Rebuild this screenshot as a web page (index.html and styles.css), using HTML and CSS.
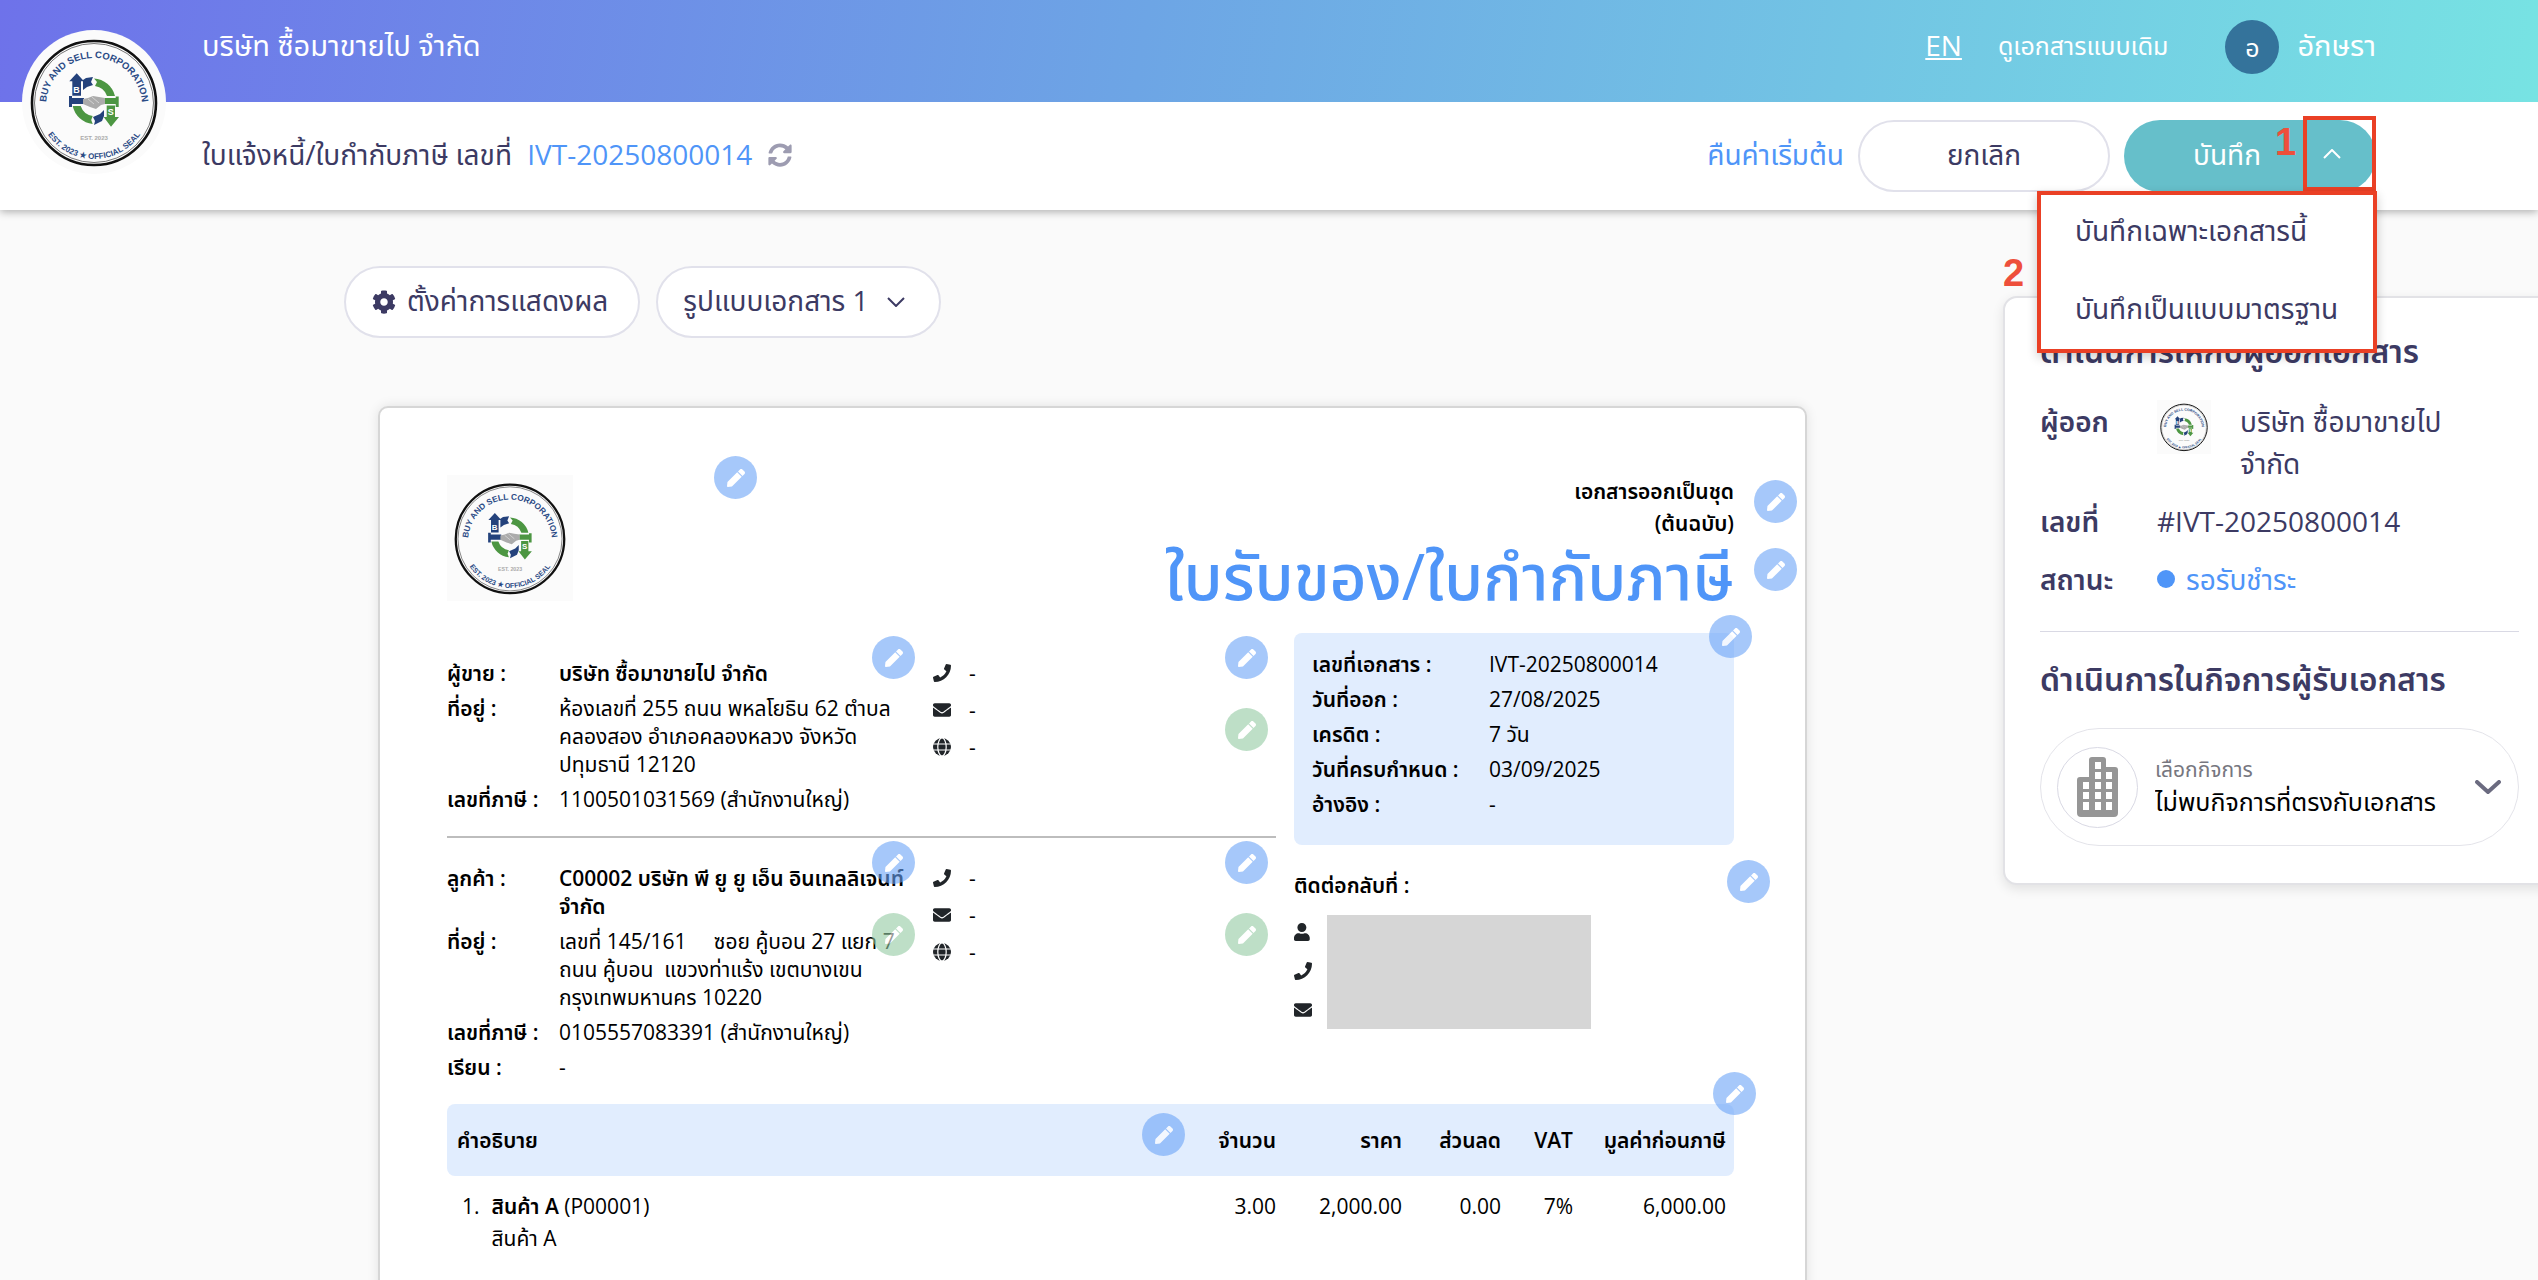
FILE: index.html
```html
<!DOCTYPE html>
<html lang="th">
<head>
  <meta charset="UTF-8" />
  <meta name="viewport" content="width=device-width, initial-scale=1.0"/>
  <title>ใบแจ้งหนี้/ใบกำกับภาษี IVT-20250800014</title>
  <link rel="stylesheet" href="styles.css">
</head>
<body>

  <!-- ICONS -->
  <svg class="sprite" aria-hidden="true">
    <symbol id="pen" viewBox="0 0 512 512"><path d="M290.74 93.24l128.02 128.02-277.99 277.99-114.14 12.6C11.35 513.54-1.56 500.62.14 485.34l12.7-114.22 277.9-277.88zm207.2-19.06l-60.11-60.11c-18.75-18.75-49.16-18.75-67.91 0l-56.55 56.55 128.02 128.02 56.55-56.55c18.75-18.76 18.75-49.16 0-67.91z"/></symbol>
    <symbol id="phone" viewBox="0 0 512 512"><path d="M493.4 24.6l-104-24c-11.3-2.6-22.9 3.3-27.5 13.9l-48 112c-4.2 9.8-1.4 21.3 6.9 28l60.6 49.6c-36 76.7-98.9 140.5-177.2 177.2l-49.6-60.6c-6.8-8.3-18.2-11.1-28-6.9l-112 48C3.9 366.5-2 378.1.6 389.4l24 104C27.1 504.2 36.7 512 48 512c256.1 0 464-207.5 464-464 0-11.2-7.7-20.9-18.6-23.4z"/></symbol>
    <symbol id="mail" viewBox="0 0 512 512"><path d="M502.3 190.8c3.9-3.1 9.7-.2 9.7 4.7V400c0 26.5-21.5 48-48 48H48c-26.5 0-48-21.5-48-48V195.6c0-5 5.7-7.8 9.7-4.7 22.4 17.4 52.1 39.5 154.1 113.6 21.1 15.4 56.7 47.8 92.2 47.6 35.7.3 72-32.8 92.3-47.6 102-74.1 131.6-96.3 154-113.7zM256 320c23.2.4 56.6-29.2 73.4-41.4 132.7-96.3 142.8-104.7 173.4-128.7 5.8-4.5 9.2-11.5 9.2-18.9v-19c0-26.5-21.5-48-48-48H48c-26.5 0-48 21.5-48 48v19c0 7.4 3.4 14.3 9.2 18.9 30.6 23.9 40.7 32.4 173.4 128.7 16.8 12.2 50.2 41.8 73.4 41.4z"/></symbol>
    <symbol id="user" viewBox="0 0 512 512"><path d="M224 256c70.7 0 128-57.3 128-128S294.7 0 224 0 96 57.3 96 128s57.3 128 128 128zm89.6 32h-16.7c-22.2 10.2-46.9 16-72.9 16s-50.6-5.8-72.9-16h-16.7C60.2 288 0 348.2 0 422.4V464c0 26.5 21.5 48 48 48h352c26.5 0 48-21.5 48-48v-41.6c0-74.2-60.2-134.4-134.4-134.4z"/></symbol>
    <symbol id="globe" viewBox="0 0 18 18"><circle cx="9" cy="9" r="9"/><g fill="none" stroke="#fff" stroke-width="1.2"><ellipse cx="9" cy="9" rx="4.2" ry="9"/><path d="M0 6h18M0 12h18"/></g></symbol>
    <symbol id="cog" viewBox="0 0 512 512"><path d="M487.4 315.7l-42.6-24.6c4.3-23.2 4.3-47 0-70.2l42.6-24.6c4.9-2.8 7.1-8.6 5.5-14-11.1-35.6-30-67.8-54.7-94.6-3.8-4.1-10-5.1-14.8-2.3L380.8 110c-17.9-15.4-38.5-27.3-60.8-35.1V25.8c0-5.6-3.9-10.5-9.4-11.7-36.7-8.2-74.3-7.8-109.2 0-5.5 1.2-9.4 6.1-9.4 11.7V75c-22.2 7.9-42.8 19.8-60.8 35.1L88.7 85.5c-4.9-2.8-11-1.9-14.8 2.3-24.7 26.7-43.6 58.9-54.7 94.6-1.7 5.4.6 11.2 5.5 14L67.3 221c-4.3 23.2-4.3 47 0 70.2l-42.6 24.6c-4.9 2.8-7.1 8.6-5.5 14 11.1 35.6 30 67.8 54.7 94.6 3.8 4.1 10 5.1 14.8 2.3l42.6-24.6c17.9 15.4 38.5 27.3 60.8 35.1v49.2c0 5.6 3.9 10.5 9.4 11.7 36.7 8.2 74.3 7.8 109.2 0 5.5-1.2 9.4-6.1 9.4-11.7v-49.2c22.2-7.9 42.8-19.8 60.8-35.1l42.6 24.6c4.9 2.8 11 1.9 14.8-2.3 24.7-26.7 43.6-58.9 54.7-94.6 1.5-5.5-.7-11.3-5.6-14.1zM256 336c-44.1 0-80-35.9-80-80s35.9-80 80-80 80 35.9 80 80-35.9 80-80 80z"/></symbol>
    <symbol id="sync" viewBox="0 0 512 512"><path d="M370.72 133.28C339.458 104.008 298.888 87.962 255.848 88c-77.458.068-144.328 53.178-162.791 126.85-1.344 5.363-6.122 9.15-11.651 9.15H24.103c-7.498 0-13.194-6.807-11.807-14.176C33.933 94.924 134.813 8 256 8c66.448 0 126.791 26.136 171.315 68.685L463.03 40.97C478.149 25.851 504 36.559 504 57.941V192c0 13.255-10.745 24-24 24H345.941c-21.382 0-32.09-25.851-16.971-40.971l41.75-41.749zM32 296h134.059c21.382 0 32.09 25.851 16.971 40.971l-41.75 41.75c31.262 29.273 71.835 45.319 114.876 45.28 77.418-.07 144.315-53.144 162.787-126.849 1.344-5.363 6.122-9.15 11.651-9.15h57.304c7.498 0 13.194 6.807 11.807 14.176C478.067 417.076 377.187 504 256 504c-66.448 0-126.791-26.136-171.315-68.685L48.97 471.03C33.851 486.149 8 475.441 8 454.059V320c0-13.255 10.745-24 24-24z"/></symbol>
    <symbol id="seal" viewBox="0 0 144 144">
      <path id="arc-top" d="M24 76a48 48 0 0 1 96 0" fill="none"/>
      <path id="arc-bottom" d="M16 73a56 56 0 0 0 112 0" fill="none"/>
      <rect width="144" height="144" fill="#fbfbfb"/>
      <circle cx="72" cy="73" r="62" fill="none" stroke="#111" stroke-width="2.6"/>
      <circle cx="72" cy="73" r="59.5" fill="none" stroke="#555" stroke-width="0.8"/>
      <g font-family="Liberation Sans Narrow, Liberation Sans, sans-serif" font-weight="bold" text-anchor="middle">
        <text font-size="9.5" fill="#2a4a85"><textPath href="#arc-top" startOffset="50%">BUY AND SELL CORPORATION</textPath></text>
        <text font-size="8" fill="#2a4a85"><textPath href="#arc-bottom" startOffset="50%">EST. 2023 ★ OFFICIAL SEAL</textPath></text>
        <text x="72" y="110" font-size="6" fill="#aaa">EST. 2023</text>
      </g>
      <g fill="#24427c">
        <path d="M54.7 43.3L62 51.3H59V65.7H50.3V51.3H47.3zM61 50l3-2 7-1-2 5 2 3-6 2-4 3zM47 66h3v2h12v6H50v3h-3zM71 87l7-3 4-4v6l-2 5-8 4 1-4z"/>
      </g>
      <g fill="#4c9642">
        <path d="M72 48.500a23 23 0 0 1 21 17.500h-8a15 15 0 0 0-12-10l2-4zM82.700 68h11v-1.500h3v10.500h-3V74h-11zM84.700 75.500H93V87h4l-8 9.700L81.700 87h3zM50.700 76h8a15 15 0 0 0 12 10l-1.500 4 1.500 4a23 23 0 0 1-20-18z"/>
      </g>
      <path d="M61 69l5-1 5-2 6 1 6 1v6l-4 1-5 4-6-2-7-3z" fill="#ababab"/>
      <path d="M66 69l6 5M70 67l7 6" stroke="#ddd" stroke-width="0.800"/>
      <g font-family="Liberation Sans, sans-serif" font-weight="bold" font-size="9" fill="#fff" text-anchor="middle">
        <text x="54.500" y="63">B</text>
        <text x="88.800" y="85">S</text>
      </g>
    </symbol>
  </svg>

  <!-- HEADER -->
  <header class="header">
    <svg class="header-logo"><use href="#seal"/></svg>
    <div class="topbar">
      <span class="topbar-name">บริษัท ซื้อมาขายไป จำกัด</span>
      <nav class="topbar-nav">
        <a href="#" class="lang">EN</a>
        <a href="#" class="old-view">ดูเอกสารแบบเดิม</a>
        <a href="#" class="account"><span class="avatar">อ</span><span class="account-name">อักษรา</span></a>
      </nav>
    </div>
    <div class="actionbar">
      <h1 class="doc-number">ใบแจ้งหนี้/ใบกำกับภาษี เลขที่ <span class="blue">IVT-20250800014</span>
        <button class="refresh" aria-label="รีเฟรช"><svg><use href="#sync"/></svg></button>
      </h1>
      <div class="actions">
        <a href="#" class="reset">คืนค่าเริ่มต้น</a>
        <button class="btn btn-cancel">ยกเลิก</button>
        <div class="save-group">
          <button class="btn btn-save">บันทึก</button>
          <button class="btn-toggle" aria-label="ตัวเลือกการบันทึก"><svg viewBox="0 0 18 10"><path d="M1 9l8-8 8 8"/></svg></button>
          <span class="mark mark-one">1</span>
          <span class="mark mark-two">2</span>
          <div class="save-menu">
            <button>บันทึกเฉพาะเอกสารนี้</button>
            <button>บันทึกเป็นแบบมาตรฐาน</button>
          </div>
        </div>
      </div>
    </div>
  </header>

  <div class="layout">
    <main class="content">
      <div class="toolbar">
        <button class="btn btn-display"><svg><use href="#cog"/></svg>ตั้งค่าการแสดงผล</button>
        <div class="template">
          <select aria-label="รูปแบบเอกสาร"><option>รูปแบบเอกสาร 1</option></select>
          <svg viewBox="0 0 18 10"><path d="M1 1l8 8 8-8"/></svg>
        </div>
      </div>

      <article class="paper">
        <div class="paper-head">
          <svg class="paper-logo"><use href="#seal"/></svg>
          <button class="edit edit-logo" aria-label="แก้ไข"><svg><use href="#pen"/></svg></button>
          <div class="paper-title">
            <p>เอกสารออกเป็นชุด</p>
            <p>(ต้นฉบับ)</p>
            <h2>ใบรับของ/ใบกำกับภาษี</h2>
          </div>
          <button class="edit edit-set" aria-label="แก้ไข"><svg><use href="#pen"/></svg></button>
          <button class="edit edit-title" aria-label="แก้ไข"><svg><use href="#pen"/></svg></button>
        </div>

        <div class="paper-info">
          <div class="parties">
            <section class="party seller">
              <dl class="fields">
                <dt>ผู้ขาย :</dt><dd><b>บริษัท ซื้อมาขายไป จำกัด</b></dd>
                <dt>ที่อยู่ :</dt><dd>ห้องเลขที่ 255 ถนน พหลโยธิน 62 ตำบล<br>คลองสอง อำเภอคลองหลวง จังหวัด<br>ปทุมธานี 12120</dd>
                <dt>เลขที่ภาษี :</dt><dd>1100501031569 (สำนักงานใหญ่)</dd>
              </dl>
              <ul class="contacts">
                <li><svg><use href="#phone"/></svg>-</li>
                <li><svg><use href="#mail"/></svg>-</li>
                <li><svg><use href="#globe"/></svg>-</li>
              </ul>
              <button class="edit edit-mid" aria-label="แก้ไข"><svg><use href="#pen"/></svg></button>
              <button class="edit edit-end" aria-label="แก้ไข"><svg><use href="#pen"/></svg></button>
              <button class="edit edit-end edit-green" aria-label="แก้ไข"><svg><use href="#pen"/></svg></button>
            </section>
            <section class="party customer">
              <dl class="fields">
                <dt>ลูกค้า :</dt><dd><b>C00002 บริษัท พี ยู ยู เอ็น อินเทลลิเจนท์<br>จำกัด</b></dd>
                <dt>ที่อยู่ :</dt><dd>เลขที่ 145/161 &nbsp; &nbsp; ซอย คู้บอน 27 แยก 7<br>ถนน คู้บอน &nbsp;แขวงท่าแร้ง เขตบางเขน<br>กรุงเทพมหานคร 10220</dd>
                <dt>เลขที่ภาษี :</dt><dd>0105557083391 (สำนักงานใหญ่)</dd>
                <dt>เรียน :</dt><dd>-</dd>
              </dl>
              <ul class="contacts">
                <li><svg><use href="#phone"/></svg>-</li>
                <li><svg><use href="#mail"/></svg>-</li>
                <li><svg><use href="#globe"/></svg>-</li>
              </ul>
              <button class="edit edit-mid" aria-label="แก้ไข"><svg><use href="#pen"/></svg></button>
              <button class="edit edit-mid edit-green" aria-label="แก้ไข"><svg><use href="#pen"/></svg></button>
              <button class="edit edit-end" aria-label="แก้ไข"><svg><use href="#pen"/></svg></button>
              <button class="edit edit-end edit-green" aria-label="แก้ไข"><svg><use href="#pen"/></svg></button>
            </section>
          </div>

          <div class="meta">
            <dl class="meta-box">
              <dt>เลขที่เอกสาร :</dt><dd>IVT-20250800014</dd>
              <dt>วันที่ออก :</dt><dd>27/08/2025</dd>
              <dt>เครดิต :</dt><dd>7 วัน</dd>
              <dt>วันที่ครบกำหนด :</dt><dd>03/09/2025</dd>
              <dt>อ้างอิง :</dt><dd>-</dd>
            </dl>
            <h3 class="callback">ติดต่อกลับที่ :</h3>
            <div class="callback-row">
              <ul class="contacts">
                <li><svg><use href="#user"/></svg></li>
                <li><svg><use href="#phone"/></svg></li>
                <li><svg><use href="#mail"/></svg></li>
              </ul>
              <div class="hidden-info"></div>
            </div>
            <button class="edit edit-meta" aria-label="แก้ไข"><svg><use href="#pen"/></svg></button>
            <button class="edit edit-callback" aria-label="แก้ไข"><svg><use href="#pen"/></svg></button>
          </div>
        </div>

        <div class="items-wrap">
          <table class="items">
            <thead>
              <tr>
                <th class="col-name">คำอธิบาย</th>
                <th class="col-qty">จำนวน</th>
                <th class="col-price">ราคา</th>
                <th class="col-discount">ส่วนลด</th>
                <th class="col-vat">VAT</th>
                <th class="col-total">มูลค่าก่อนภาษี</th>
              </tr>
            </thead>
            <tbody>
              <tr>
                <td class="item"><span class="item-no">1.</span><div><b>สินค้า A</b> (P00001)<br>สินค้า A</div></td>
                <td>3.00</td>
                <td>2,000.00</td>
                <td>0.00</td>
                <td>7%</td>
                <td>6,000.00</td>
              </tr>
            </tbody>
          </table>
          <button class="edit edit-items" aria-label="แก้ไข"><svg><use href="#pen"/></svg></button>
          <button class="edit edit-columns" aria-label="แก้ไข"><svg><use href="#pen"/></svg></button>
        </div>
      </article>
    </main>

    <!-- SIDE PANEL -->
    <aside class="panel">
      <h2>ดำเนินการให้กับผู้ออกเอกสาร</h2>
      <dl class="issuer">
        <dt>ผู้ออก</dt>
        <dd class="issuer-name"><svg><use href="#seal"/></svg><span>บริษัท ซื้อมาขายไป<br>จำกัด</span></dd>
        <dt>เลขที่</dt>
        <dd>#IVT-20250800014</dd>
        <dt>สถานะ</dt>
        <dd class="status">รอรับชำระ</dd>
      </dl>
      <h2 class="receiver">ดำเนินการในกิจการผู้รับเอกสาร</h2>
      <div class="company">
        <span class="company-icon">
          <svg viewBox="0 0 41 60">
            <path d="M12 3a3 3 0 0 1 3-3h11a3 3 0 0 1 3 3v7h9a3 3 0 0 1 3 3v43a4 4 0 0 1-4 4H4a4 4 0 0 1-4-4V23a3 3 0 0 1 3-3h9z" fill="#969696"/>
            <path d="M18 5h6v7h-6zM18 15h6v7h-6zM18 25h6v7h-6zM18 35h6v7h-6zM18 45h6v8h-6zM29 15h6v7h-6zM29 25h6v7h-6zM29 35h6v7h-6zM29 45h6v8h-6zM6 25h6v7H6zM6 35h6v7H6zM6 45h6v8H6z" fill="#fff"/>
          </svg>
        </span>
        <div class="company-text">
          <label for="company">เลือกกิจการ</label>
          <select id="company"><option>ไม่พบกิจการที่ตรงกับเอกสาร</option></select>
        </div>
        <svg class="company-arrow" viewBox="0 0 26 14"><path d="M2 2l11 10L24 2"/></svg>
      </div>
    </aside>
  </div>

</body>
</html>
```

FILE: styles.css
```css
* {
  box-sizing: border-box;
}

body {
  margin: 0;
  min-height: 100vh;
  overflow: hidden;
  background: #fafafa;
  color: #3c3a63;
  font-family: "Open Sans", "Noto Sans Thai", "Noto Sans", sans-serif;
  font-size: 28px;
  line-height: 42px;
}

h1, h2, h3, p, dl, dd, ul {
  margin: 0;
  padding: 0;
}

ul {
  list-style: none;
}

a {
  color: inherit;
  text-decoration: none;
}

button, select {
  font: inherit;
  color: inherit;
  background: none;
  border: 0;
  padding: 0;
  margin: 0;
  cursor: pointer;
}

select {
  appearance: none;
}

.sprite {
  position: absolute;
  width: 0;
  height: 0;
}

.blue {
  color: #4f95f8;
}

/* HEADER */
.header {
  position: relative;
  z-index: 2;
  background: #fff;
  box-shadow: 0 2px 8px rgba(0, 0, 0, 0.3);
}

.header-logo {
  position: absolute;
  left: 22px;
  top: 30px;
  width: 144px;
  height: 144px;
  border-radius: 50%;
}

.topbar,
.actionbar {
  display: flex;
  justify-content: space-between;
  align-items: center;
  padding: 0 162px 0 202px;
}

.topbar {
  height: 102px;
  padding-bottom: 8px;
  color: #fff;
  background: linear-gradient(100deg, #6e72ea, #6da5e5 45%, #77e3e3);
}

.topbar-name,
.lang,
.old-view,
.account-name,
.doc-number,
.reset {
  padding-bottom: 4px;
}

.topbar-name,
.account-name {
  font-size: 29px;
}

.topbar-nav {
  display: flex;
  align-items: center;
}

.lang {
  margin-right: 36px;
  text-decoration: underline;
}

.old-view {
  margin-right: 57px;
  font-size: 25px;
}

.account {
  display: flex;
  align-items: center;
  gap: 18px;
}

.avatar {
  width: 54px;
  height: 54px;
  border-radius: 50%;
  background: #34739b;
  font-size: 25px;
  line-height: 54px;
  text-align: center;
}

.actionbar {
  height: 108px;
}

.doc-number {
  font-size: 28px;
  font-weight: 400;
}

.doc-number .blue {
  margin: 0 8px;
}

.refresh svg {
  display: block;
  width: 24px;
  height: 24px;
  margin-bottom: -2px;
  fill: #9d9cb1;
}

.actions {
  display: flex;
  align-items: center;
  gap: 14px;
}

.reset {
  color: #4f95f8;
}

.btn {
  height: 72px;
  padding-bottom: 4px;
  border: 2px solid #e1e1eb;
  border-radius: 36px;
  background: #fff;
}

.btn-cancel {
  width: 252px;
}

.save-group {
  position: relative;
  display: flex;
  width: 252px;
  height: 72px;
  border-radius: 36px;
  background: #66bfca;
  color: #fff;
}

.btn-save {
  flex: 1;
  border: 0;
  background: none;
  padding-left: 27px;
}

.btn-toggle {
  width: 73px;
  height: 75px;
  margin-top: -4px;
  padding-right: 16px;
  border: 4px solid #ea4025;
}

.btn-toggle svg {
  display: block;
  width: 18px;
  margin: auto;
}

.btn-toggle path,
.template path,
.company-arrow path {
  fill: none;
  stroke: currentColor;
  stroke-width: 2;
}

.mark {
  position: absolute;
  color: #ee4f3b;
  font: bold 38px/38px "Liberation Sans", Arial, sans-serif;
}

.mark-one {
  left: 151px;
  top: 3px;
}

.mark-two {
  left: -121px;
  top: 134px;
}

.save-menu {
  position: absolute;
  top: 71px;
  right: -1px;
  width: 340px;
  height: 162px;
  border: 4px solid #ea4025;
  background: #fff;
  color: #3c3a63;
  box-shadow: 0 4px 10px rgba(0, 0, 0, 0.2);
}

.save-menu button {
  display: block;
  width: 100%;
  height: 78px;
  padding: 0 0 8px 34px;
  text-align: left;
}

/* PAGE LAYOUT */
.layout {
  display: flex;
  align-items: flex-start;
}

.content {
  flex: 1;
  padding: 56px 162px 0 344px;
}

.toolbar {
  display: flex;
  gap: 16px;
}

.btn-display {
  display: flex;
  align-items: center;
  gap: 11px;
  padding: 0 30px 4px 26px;
}

.btn-display svg {
  width: 24px;
  height: 24px;
  margin-top: 4px;
  fill: currentColor;
}

.template {
  position: relative;
}

.template select {
  width: 285px;
  height: 72px;
  padding: 0 60px 4px 25px;
  border: 2px solid #e1e1eb;
  border-radius: 36px;
  background: #fff;
}

.template svg {
  position: absolute;
  right: 36px;
  top: 31px;
  width: 18px;
  pointer-events: none;
}

/* PAPER */
.paper {
  margin: 68px 34px 0;
  padding: 67px 71px 60px 67px;
  min-height: 900px;
  border: 2px solid #d6d6d6;
  border-radius: 10px;
  background: #fff;
  box-shadow: 0 0 12px rgba(0, 0, 0, 0.1);
  color: #000;
  font-size: 21px;
  line-height: 28px;
}

.paper b,
.paper dt,
.paper th,
.callback {
  font-weight: 600;
}

.paper-head {
  position: relative;
  display: flex;
  justify-content: space-between;
  height: 158px;
}

.paper-logo {
  width: 126px;
  height: 126px;
}

.paper-title {
  text-align: right;
  font-weight: 600;
  line-height: 32px;
}

.paper-title h2 {
  color: #4f95f8;
  font-size: 64px;
  font-weight: 500;
  line-height: 74px;
}

.edit {
  position: absolute;
  width: 43px;
  height: 43px;
  border-radius: 50%;
  background: #6ca5f8;
  opacity: 0.6;
}

.edit svg {
  display: block;
  width: 18px;
  height: 18px;
  margin: auto;
  fill: #fff;
}

.edit-green {
  background: #93cba3;
  margin-top: 72px;
}

.edit-logo {
  left: 267px;
  top: -19px;
}

.edit-set {
  right: -63px;
  top: 5px;
}

.edit-title {
  right: -63px;
  top: 73px;
}

.edit-mid {
  left: 425px;
  top: 3px;
}

.edit-end {
  right: 8px;
  top: 3px;
}

.edit-meta {
  right: -18px;
  top: -18px;
}

.edit-callback {
  right: -36px;
  top: 227px;
}

.edit-items {
  right: -22px;
  top: -32px;
}

.edit-columns {
  right: 549px;
  top: 9px;
}

.paper-info {
  display: flex;
  gap: 18px;
}

.parties {
  flex: 1;
}

.party {
  position: relative;
  display: grid;
  grid-template-columns: 486px 1fr;
  align-items: start;
  padding-top: 26px;
}

.seller {
  height: 205px;
  border-bottom: 2px solid #bdbdbd;
}

.customer {
  height: 266px;
}

.fields {
  display: grid;
  grid-template-columns: 112px 1fr;
  row-gap: 7px;
  white-space: nowrap;
}

.contacts {
  display: grid;
  gap: 9px;
}

.contacts li {
  display: flex;
  align-items: center;
  gap: 18px;
}

.contacts svg {
  width: 18px;
  height: 18px;
  fill: #212529;
}

.meta {
  position: relative;
  width: 440px;
}

.meta-box {
  display: grid;
  grid-template-columns: 177px 1fr;
  align-content: start;
  height: 212px;
  padding: 14px 18px;
  border-radius: 8px;
  background: #e1edfe;
  line-height: 35px;
}

.callback {
  margin-top: 26px;
  font-size: 21px;
}

.callback-row {
  display: flex;
  gap: 15px;
  margin-top: 16px;
}

.callback-row .contacts {
  align-content: start;
  gap: 11px;
  padding-top: 3px;
}

.callback-row li {
  height: 28px;
}

.hidden-info {
  width: 264px;
  height: 114px;
  background: #d6d6d6;
}

.items-wrap {
  position: relative;
}

.items {
  width: 100%;
  border-spacing: 0;
  table-layout: fixed;
}

.items th {
  height: 72px;
  padding: 0;
  background: #e1edfe;
  text-align: right;
  white-space: nowrap;
}

.items th:first-child {
  padding-left: 10px;
  border-radius: 8px 0 0 8px;
  text-align: left;
}

.items th:last-child {
  padding-right: 8px;
  border-radius: 0 8px 8px 0;
}

.col-qty {
  width: 120px;
}

.col-price {
  width: 126px;
}

.col-discount {
  width: 99px;
}

.col-vat {
  width: 72px;
}

.col-total {
  width: 161px;
}

.items td {
  padding: 14px 0 0;
  text-align: right;
  vertical-align: top;
  line-height: 32px;
}

.items td:last-child {
  padding-right: 8px;
}

.items .item {
  display: flex;
  gap: 12px;
  padding-left: 15px;
  text-align: left;
}

/* SIDE PANEL */
.panel {
  flex: 0 0 553px;
  height: 589px;
  margin: 86px -18px 0 0;
  padding: 30px 35px;
  border: 2px solid #e2e2e6;
  border-radius: 14px;
  background: #fff;
  box-shadow: 0 4px 12px rgba(0, 0, 0, 0.1);
}

.panel h2 {
  font-size: 32px;
  font-weight: 600;
  line-height: 46px;
}

.issuer {
  display: grid;
  grid-template-columns: 117px 1fr;
  row-gap: 16px;
  margin-top: 26px;
  padding-bottom: 31px;
  border-bottom: 1px solid #d9d9e4;
}

.issuer dt {
  font-weight: 600;
}

.issuer-name {
  display: flex;
  gap: 29px;
}

.issuer-name svg {
  width: 54px;
  height: 54px;
}

.status {
  display: flex;
  align-items: center;
  gap: 11px;
  color: #4f95f8;
}

.status::before {
  content: "";
  width: 18px;
  height: 18px;
  border-radius: 50%;
  background: #4f95f8;
}

.panel .receiver {
  margin-top: 24px;
}

.company {
  display: flex;
  align-items: center;
  height: 118px;
  margin-top: 26px;
  padding: 0 17px 0 16px;
  border: 1px solid #e4e4ea;
  border-radius: 59px;
}

.company-icon {
  display: flex;
  align-items: center;
  justify-content: center;
  width: 81px;
  height: 81px;
  border: 1px solid #d9d9e4;
  border-radius: 50%;
}

.company-icon svg {
  width: 41px;
  height: 60px;
}

.company-text {
  flex: 1;
  margin-left: 17px;
}

.company-text label {
  display: block;
  color: #77777f;
  font-size: 21px;
  line-height: 28px;
}

.company-text select {
  display: block;
  width: 100%;
  color: #000;
  font-size: 25px;
  line-height: 36px;
}

.company-arrow {
  width: 26px;
  color: #6b6b80;
}

.company-arrow path {
  stroke-width: 4;
  stroke-linecap: round;
}
```
